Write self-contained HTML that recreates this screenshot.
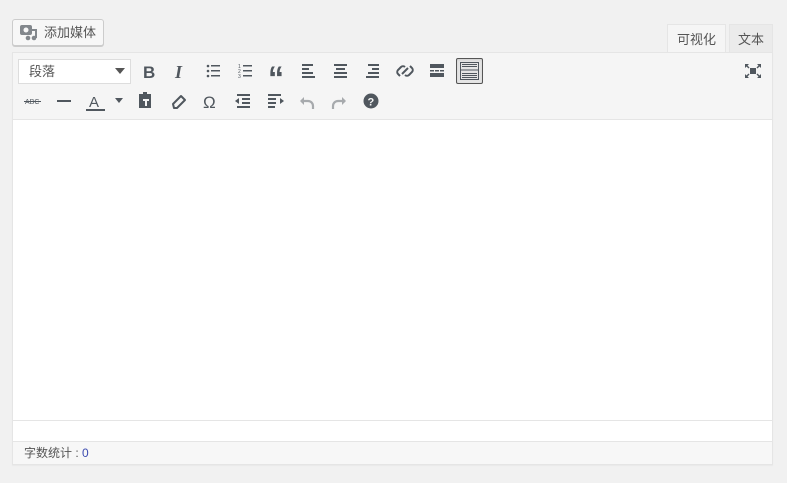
<!DOCTYPE html>
<html><head><meta charset="utf-8"><style>
*{margin:0;padding:0;box-sizing:border-box}
body{width:787px;height:483px;background:#f1f1f1;font-family:"Liberation Sans","Noto Sans CJK SC",sans-serif;position:relative;overflow:hidden;color:#555}
.a{position:absolute}
.btn{left:12px;top:19px;width:92px;height:27px;background:#f7f7f7;border:1px solid #ccc;border-radius:3px;box-shadow:0 1px 0 #ccc;font-size:13px;color:#555;line-height:25px;padding-left:31px}
.tab{top:24px;height:29px;font-size:13px;line-height:29px;text-align:center;border:1px solid #e5e5e5;border-bottom:none}
.wrap{left:12px;top:52px;width:761px;height:413px;border:1px solid #e5e5e5;background:#fff;box-shadow:0 1px 1px rgba(0,0,0,.04)}
.tb{left:0;top:0;width:759px;height:67px;background:#f5f5f5;border-bottom:1px solid #e5e5e5}
svg{display:block}
</style></head><body>
<div class="a btn">添加媒体</div>
<svg class="a" style="left:20px;top:24px" width="18" height="17" viewBox="0 0 18 17"><rect x="0" y="1" width="12" height="10" rx="2" fill="#82878c"/><circle cx="6" cy="6" r="2.5" fill="#f7f7f7"/><path d="M12 6h4v8" stroke="#82878c" stroke-width="2" fill="none"/><circle cx="14" cy="14" r="2.3" fill="#82878c"/><circle cx="8" cy="14" r="2.3" fill="#82878c"/></svg>
<div class="a tab" style="left:667px;width:59px;background:#f5f5f5;color:#555;height:30px">可视化</div>
<div class="a tab" style="left:729px;width:44px;background:#ebebeb;color:#555">文本</div>
<div class="a wrap">
 <div class="a tb"></div>
 <div class="a" style="left:0;top:367px;width:759px;height:1px;background:#e5e5e5"></div>
 <div class="a" style="left:0;top:388px;width:759px;height:23px;background:#f7f7f7;border-top:1px solid #e5e5e5;font-size:12px;line-height:22px;padding-left:11px;color:#555">字数统计 : <span style="color:#3c4bb0">0</span></div>
</div>
<div class="a" style="left:18px;top:59px;width:113px;height:25px;background:#fff;border:1px solid #ddd;font-size:13px;line-height:23px;padding-left:10px;color:#555">段落</div>
<svg class="a" style="left:115px;top:68px" width="10" height="7"><path d="M0 0h10L5 6z" fill="#555"/></svg>
<div class="a" style="left:456px;top:58px;width:27px;height:26px;border:1px solid #555;border-radius:2px;background:#e5e5e5;box-shadow:inset 0 1px 2px rgba(0,0,0,.1)"></div>
<svg class="a" width="787" height="120" style="left:0;top:0" fill="#50575e" stroke="#50575e">
<g stroke="none">
<text x="143" y="78" font-family="Liberation Sans" font-weight="bold" font-size="17">B</text>
<text x="175" y="78" font-family="Liberation Serif" font-style="italic" font-weight="bold" font-size="18">I</text>
<circle cx="208" cy="66" r="1.3"/><circle cx="208" cy="71" r="1.3"/><circle cx="208" cy="76" r="1.3"/><rect x="211" y="65" width="9" height="1.5"/><rect x="211" y="70" width="9" height="1.5"/><rect x="211" y="75" width="9" height="1.5"/>
<text x="238" y="68" font-size="5" font-family="Liberation Sans">1</text><text x="238" y="73" font-size="5" font-family="Liberation Sans">2</text><text x="238" y="78" font-size="5" font-family="Liberation Sans">3</text><rect x="243" y="65" width="9" height="1.5"/><rect x="243" y="70" width="9" height="1.5"/><rect x="243" y="75" width="9" height="1.5"/>
<text x="268" y="89" font-size="32" font-weight="bold" font-family="Liberation Sans">“</text>
<rect x="302" y="64" width="11" height="2"/><rect x="302" y="68" width="7" height="2"/><rect x="302" y="72" width="11" height="2"/><rect x="302" y="76" width="13" height="2"/>
<rect x="334" y="64" width="13" height="2"/><rect x="336" y="68" width="9" height="2"/><rect x="334" y="72" width="13" height="2"/><rect x="334" y="76" width="13" height="2"/>
<rect x="368" y="64" width="11" height="2"/><rect x="372" y="68" width="7" height="2"/><rect x="368" y="72" width="11" height="2"/><rect x="366" y="76" width="13" height="2"/>
<rect x="430" y="64" width="14" height="4"/><rect x="430" y="70" width="4" height="1.5"/><rect x="435" y="70" width="4" height="1.5"/><rect x="440" y="70" width="4" height="1.5"/><rect x="430" y="73" width="14" height="4"/>
<rect x="460.5" y="62.5" width="18" height="17" fill="none" stroke="#50575e" stroke-width="1"/>
<path d="M462 64h15v1h-15zM462 66h15v1h-15zM462 73h15v1h-15zM462 75h15v1h-15zM462 77h15v1h-15z" fill="#50575e"/><rect x="461" y="69.5" width="17" height="1"/>
<path d="M745 64l4 0-1.5 1.5 2 2-1 1-2-2L745 68z M761 64l-4 0 1.5 1.5-2 2 1 1 2-2 1.5 1.5z M745 78l4 0-1.5-1.5 2-2-1-1-2 2L745 74z M761 78l-4 0 1.5-1.5-2-2 1-1 2 2 1.5-1.5z"/><rect x="750" y="68" width="6" height="6"/>
<text x="25" y="104" font-size="7" font-family="Liberation Sans">ABC</text><rect x="24" y="101" width="17" height="1"/>
<rect x="57" y="100" width="14" height="2"/>
<text x="89" y="107" font-size="15" font-family="Liberation Sans">A</text><rect x="86" y="109" width="19" height="2"/>
<path d="M115 98h8l-4 5z"/>
<path d="M139 94h4v-2h4v2h4v14h-12z"/><rect x="143" y="99" width="6" height="2" fill="#f5f5f5"/><rect x="145" y="101" width="2" height="5" fill="#f5f5f5"/>
<text x="203" y="108" font-size="17" font-family="Liberation Sans">Ω</text>
<rect x="237" y="94" width="13" height="2"/><rect x="242" y="98" width="8" height="2"/><rect x="242" y="102" width="8" height="2"/><rect x="237" y="106" width="13" height="2"/><path d="M235 101l4-3v6z"/>
<rect x="268" y="94" width="13" height="2"/><rect x="268" y="98" width="8" height="2"/><rect x="268" y="102" width="8" height="2"/><rect x="268" y="106" width="7" height="2"/><path d="M284 101l-4-3v6z"/>
<circle cx="371" cy="101" r="7.5"/><text x="367.5" y="105.5" font-size="11" font-weight="bold" fill="#f5f5f5" font-family="Liberation Sans">?</text>
</g>
<path d="M173 104l8-8 4 4-8 8h-3z" fill="none" stroke="#50575e" stroke-width="2" stroke-linejoin="round"/>
<path d="M400 76l-2-2a3 3 0 010-4l3-3a3 3 0 014 0M410 66l2 2a3 3 0 010 4l-3 3a3 3 0 01-4 0M402 74l6-6" fill="none" stroke-width="2"/>
<path d="M313 109v-3a5 5 0 00-5-5h-7" fill="none" stroke="#a7aaad" stroke-width="2.2"/><path d="M300 101l4-4v8z" fill="#a7aaad" stroke="none"/>
<path d="M333 109v-3a5 5 0 015-5h7" fill="none" stroke="#a7aaad" stroke-width="2.2"/><path d="M346 101l-4-4v8z" fill="#a7aaad" stroke="none"/>
</svg>
</body></html>
